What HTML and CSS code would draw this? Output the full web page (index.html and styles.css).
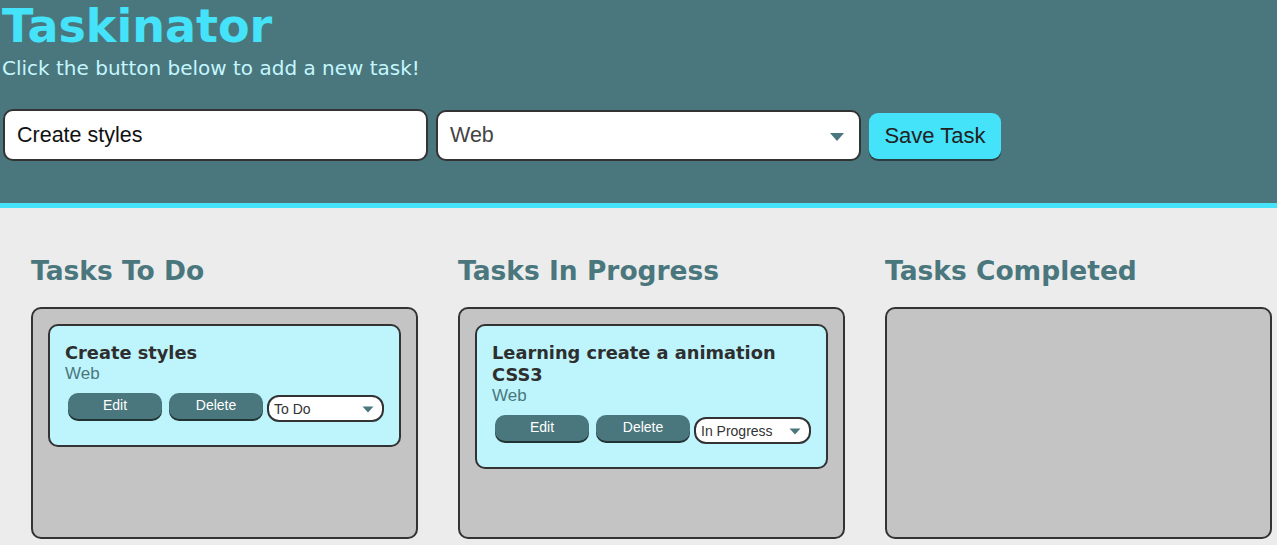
FILE: index.html
```html
<!DOCTYPE html>
<html>
<head>
<meta charset="utf-8">
<title>Taskinator</title>
<link rel="stylesheet" href="styles.css">
</head>
<body>
<header class="header">
  <h1 class="page-title">Taskinator</h1>
  <p class="page-sub">Click the button below to add a new task!</p>
  <form class="task-form">
    <div class="field"><input class="text-input" type="text" value="Create styles"></div>
    <div class="field">
      <div class="select-box big">
        <span>Web</span>
        <svg class="caret" width="16" height="10" viewBox="0 0 16 10"><path d="M1 1 L15 1 L8 9 Z" fill="#4a777d"/></svg>
      </div>
    </div>
    <button class="save-btn" type="button">Save Task</button>
  </form>
</header>
<main class="board">
  <section class="column">
    <h2 class="col-title">Tasks To Do</h2>
    <div class="task-list">
      <div class="task-card">
        <h3 class="task-name">Create styles</h3>
        <span class="task-type">Web</span>
        <div class="task-actions">
          <button class="btn" type="button">Edit</button>
          <button class="btn" type="button">Delete</button>
          <div class="select-box small"><span>To Do</span><svg class="caret-s" width="12" height="7" viewBox="0 0 12 7"><path d="M0.5 0.5 L11.5 0.5 L6 6.5 Z" fill="#4a777d"/></svg></div>
        </div>
      </div>
    </div>
  </section>
  <section class="column">
    <h2 class="col-title">Tasks In Progress</h2>
    <div class="task-list">
      <div class="task-card">
        <h3 class="task-name">Learning create a animation CSS3</h3>
        <span class="task-type">Web</span>
        <div class="task-actions">
          <button class="btn" type="button">Edit</button>
          <button class="btn" type="button">Delete</button>
          <div class="select-box small"><span>In Progress</span><svg class="caret-s" width="12" height="7" viewBox="0 0 12 7"><path d="M0.5 0.5 L11.5 0.5 L6 6.5 Z" fill="#4a777d"/></svg></div>
        </div>
      </div>
    </div>
  </section>
  <section class="column">
    <h2 class="col-title">Tasks Completed</h2>
    <div class="task-list"></div>
  </section>
</main>
</body>
</html>
```
FILE: styles.css
```css
* { box-sizing: border-box; }
html, body { margin: 0; padding: 0; }
body {
  background: #ececec;
  font-family: "DejaVu Sans", Verdana, sans-serif;
}
.header {
  background: #4a777d;
  border-bottom: 5px solid #45e3fa;
  height: 208px;
  padding: 0 2px;
}
.page-title {
  margin: 0;
  padding-top: 0;
  font-size: 46px;
  line-height: 52px;
  color: #45e3fa;
  font-weight: bold;
}
.page-sub {
  margin: 4px 0 0 0;
  font-size: 20px;
  line-height: 24px;
  color: #c4f6fd;
}
.task-form {
  display: flex;
  align-items: flex-start;
  margin-top: 29px;
  padding-left: 1px;
}
.field { margin-right: 8px; }
.text-input {
  width: 425px;
  height: 52px;
  border: 2px solid #333;
  border-radius: 10px;
  padding: 0 12px;
  font-family: "Liberation Sans", Arial, sans-serif;
  font-size: 21.5px;
  color: #111;
  background: #fff;
  outline: none;
}
.select-box {
  display: flex;
  align-items: center;
  justify-content: space-between;
  background: #fff;
  border: 2px solid #333;
  font-family: "Liberation Sans", Arial, sans-serif;
}
.select-box.big {
  width: 425px;
  height: 51px;
  margin-top: 1px;
  border-radius: 10px;
  padding: 0 14px 0 12px;
  font-size: 21.5px;
  color: #444;
}
.caret { margin-top: 2px; }
.save-btn {
  margin-top: 4px;
  width: 132px;
  height: 46px;
  background: #45e3fa;
  border: none;
  border-radius: 9px;
  box-shadow: 0 2px 0 #2c3e40;
  font-family: "Liberation Sans", Arial, sans-serif;
  font-size: 22px;
  color: #222;
}
.board {
  display: flex;
  gap: 40px;
  padding: 0 5px 0 31px;
}
.column { flex: 1; min-width: 0; }
.col-title {
  margin: 47px 0 20px 0;
  font-size: 26.5px;
  line-height: 32px;
  color: #4a777d;
  font-weight: bold;
}
.task-list {
  height: 232px;
  background: #c4c4c4;
  border: 2px solid #333;
  border-radius: 10px;
  padding: 15px 15px;
}
.task-card {
  background: #bef5fd;
  border: 2px solid #333;
  border-radius: 10px;
  padding: 16px 15px 23px 15px;
}
.task-name {
  margin: 0;
  font-size: 17.8px;
  line-height: 22px;
  color: #2e2e2e;
  font-weight: bold;
}
.task-type {
  display: block;
  font-family: "Liberation Sans", Arial, sans-serif;
  font-size: 17px;
  line-height: 20px;
  color: #4a777d;
}
.task-actions {
  display: flex;
  align-items: flex-start;
  margin-top: 9px;
  padding-left: 3px;
}
.btn {
  width: 94px;
  height: 26px;
  margin-right: 7px;
  background: #4a777d;
  color: #fff;
  border: none;
  border-radius: 10px;
  box-shadow: 0 2px 0 #233;
  font-family: "Liberation Sans", Arial, sans-serif;
  font-size: 14px;
  padding: 0 0 2px 0;
}
.btn + .btn { margin-right: 4px; }
.select-box.small {
  width: 117px;
  height: 27px;
  margin-top: 2px;
  border-radius: 12px;
  padding: 0 8px 0 5px;
  font-size: 14px;
  color: #333;
}
.caret-s { margin-top: 1px; }
```
